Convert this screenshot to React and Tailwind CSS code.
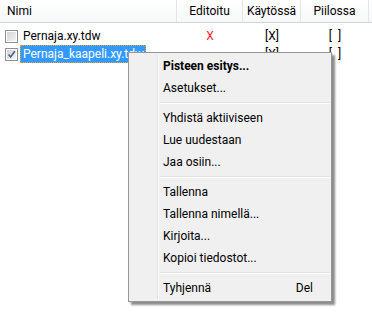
import React from 'react'

const font = { fontFamily: '"Segoe UI", Roboto, "Noto Sans", sans-serif' }

function Checkbox({ checked }) {
  return (
    <span className="flex h-[13px] w-[13px] shrink-0 items-center justify-center border border-[#8e8f8f] bg-white">
      <span className="flex h-[9px] w-[9px] items-center justify-center bg-gradient-to-br from-[#d4d4d4] to-[#f4f4f4]">
        {checked ? (
          <svg width="9" height="9" viewBox="0 0 9 9">
            <path d="M1.5 4.5 L3.6 7 L7.8 1.2" fill="none" stroke="#4a5f97" strokeWidth="1.6" />
          </svg>
        ) : null}
      </span>
    </span>
  )
}

const rows = [
  { name: 'Pernaja.xy.tdw', checked: false, edited: 'X', used: '[X]', hidden: '[\u00a0\u00a0]' },
  { name: 'Pernaja_kaapeli.xy.tdw', checked: true, edited: '', used: '[X]', hidden: '[\u00a0\u00a0]', selected: true },
]

const menu = [
  { label: 'Pisteen esitys...', bold: true },
  { label: 'Asetukset...' },
  'sep',
  { label: 'Yhdistä aktiiviseen' },
  { label: 'Lue uudestaan' },
  { label: 'Jaa osiin...' },
  'sep',
  { label: 'Tallenna' },
  { label: 'Tallenna nimellä...' },
  { label: 'Kirjoita...' },
  { label: 'Kopioi tiedostot...' },
  'sep',
  { label: 'Tyhjennä', shortcut: 'Del' },
]

export default function App() {
  return (
    <div className="relative h-[320px] w-[372px] overflow-hidden bg-white text-[12px] text-black" style={font}>
      <div className="flex h-[23px] border-b border-[#d5d5d5] bg-gradient-to-b from-white to-[#f6f7f8]">
        <div className="flex w-[177px] items-center border-r border-[#e3e4e6] pl-[7px]">Nimi</div>
        <div className="flex w-[66px] items-center justify-center border-r border-[#e3e4e6]">Editoitu</div>
        <div className="flex w-[58px] items-center justify-center border-r border-[#e3e4e6]">Käytössä</div>
        <div className="flex w-[68px] items-center justify-center border-r border-[#e3e4e6]">Piilossa</div>
        <div className="flex-1" />
      </div>
      <div className="pt-[4px]">
        {rows.map((r) => (
          <div key={r.name} className="flex h-[18px] items-center">
            <div className="flex w-[177px] items-center pl-[5px]">
              <Checkbox checked={r.checked} />
              <span
                className={
                  r.selected
                    ? 'ml-[2px] flex h-[18px] w-[126px] items-center overflow-hidden whitespace-nowrap border border-dotted border-[#e8a33c] bg-[#3399ff] pl-[2px] text-white'
                    : 'ml-[2px] flex h-[18px] items-center pl-[3px]'
                }
              >
                {r.name}
              </span>
            </div>
            <div className="w-[66px] text-center text-[#ff2020]">{r.edited}</div>
            <div className="w-[58px] text-center">{r.used}</div>
            <div className="w-[68px] text-center">{r.hidden}</div>
          </div>
        ))}
      </div>

      <div className="absolute left-[128px] top-[52px] w-[204px] border border-[#979797] bg-[#f0f0f0] py-[2px] shadow-[3px_3px_2px_rgba(0,0,0,0.45)]">
        <div className="absolute bottom-[2px] left-[28px] top-[2px] w-[2px] border-l border-[#e2e3e3] border-r border-r-white" />
        {menu.map((m, i) =>
          m === 'sep' ? (
            <div key={i} className="flex h-[8px] items-center pl-[31px] pr-[2px]">
              <div className="h-[2px] w-full border-t border-[#e0e0e0] border-b border-b-white" />
            </div>
          ) : (
            <div key={i} className="flex h-[22px] items-center pl-[34px] pr-[18px]">
              <span className={m.bold ? 'flex-1 font-bold' : 'flex-1'}>{m.label}</span>
              {m.shortcut ? <span>{m.shortcut}</span> : null}
            </div>
          )
        )}
      </div>
    </div>
  )
}
